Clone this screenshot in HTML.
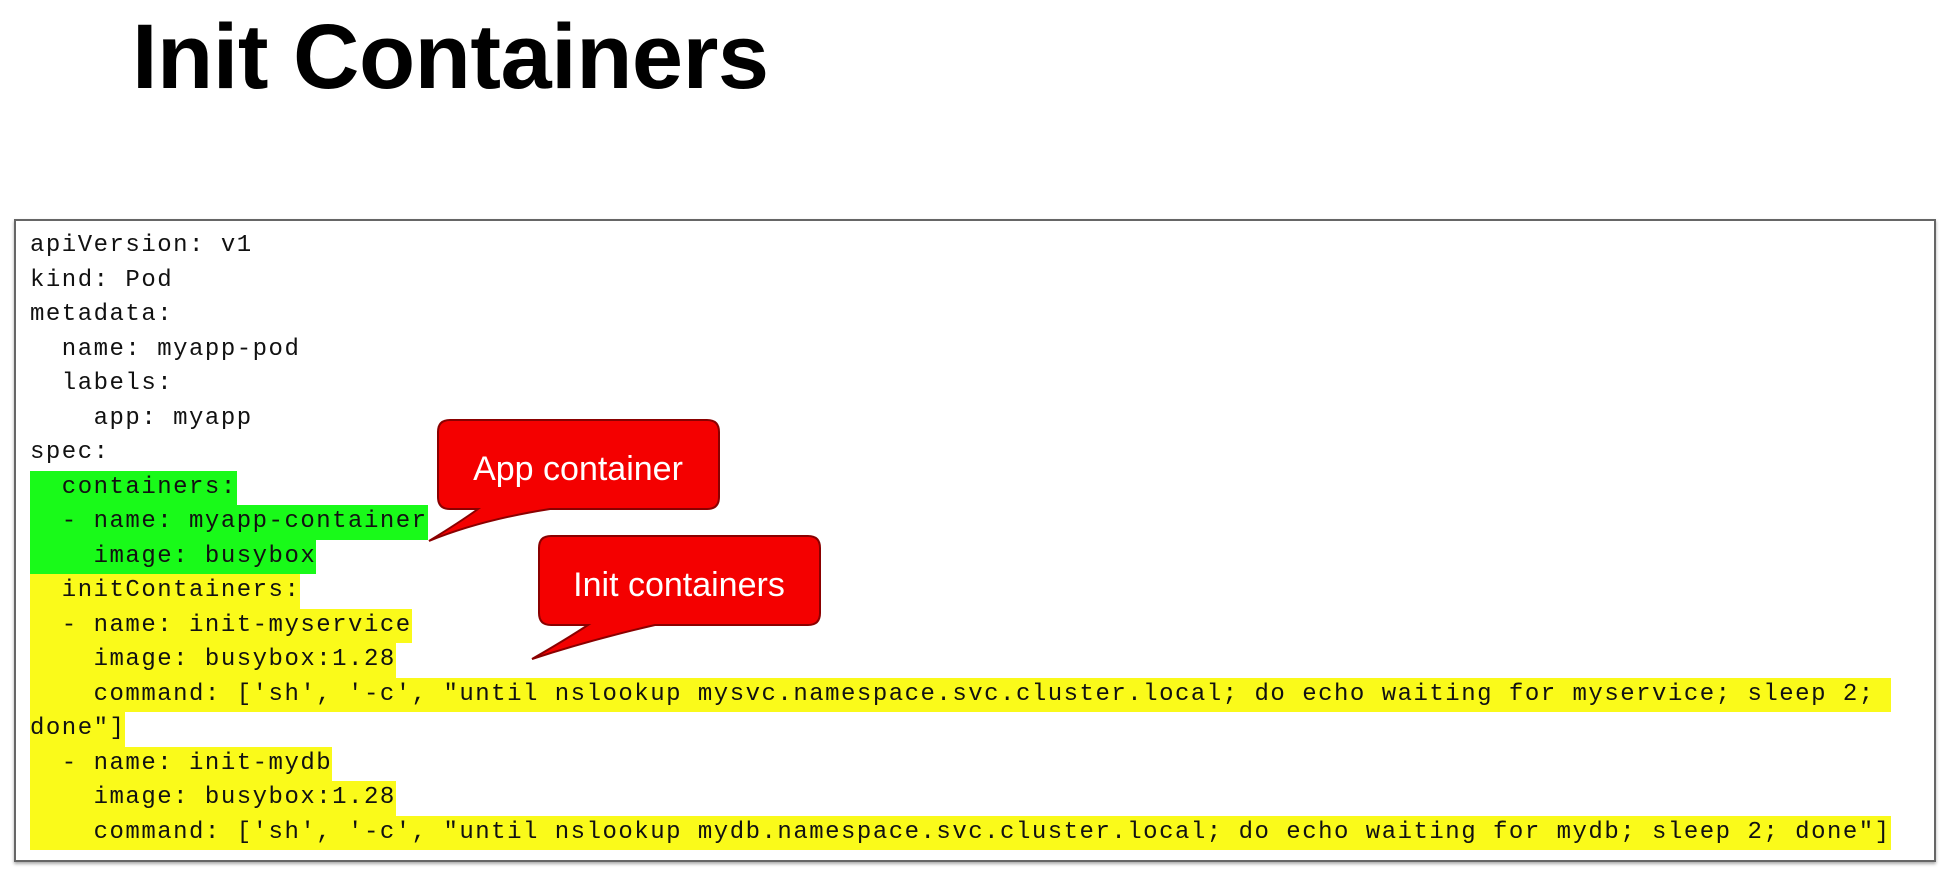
<!DOCTYPE html>
<html><head><meta charset="utf-8"><style>
html,body{margin:0;padding:0;background:#fff;width:1951px;height:883px;overflow:hidden;position:relative}
.title{position:absolute;left:132px;top:-3px;font:bold 92px/120px "Liberation Sans",sans-serif;color:#000;letter-spacing:-0.5px}
.box{position:absolute;left:14px;top:219px;width:1918px;height:639px;border:2px solid #666;box-shadow:0 2px 3px #aaa}
.code{position:absolute;left:30px;top:229px;font:24px "Liberation Mono",monospace;letter-spacing:1.5px;color:#111;white-space:pre}
.l{height:34.5px;line-height:34.5px}
.l span{display:inline-block;height:34.5px}
.g{background:#19fa19}
.y{background:#fafa1a}
svg{position:absolute;left:0;top:0}
</style></head><body>
<div class="title">Init Containers</div>
<div class="box"></div>
<div class="code"><div class="l">apiVersion: v1</div><div class="l">kind: Pod</div><div class="l">metadata:</div><div class="l">  name: myapp-pod</div><div class="l">  labels:</div><div class="l">    app: myapp</div><div class="l">spec:</div><div class="l"><span class="g">  containers:</span></div><div class="l"><span class="g">  - name: myapp-container</span></div><div class="l"><span class="g">    image: busybox</span></div><div class="l"><span class="y">  initContainers:</span></div><div class="l"><span class="y">  - name: init-myservice</span></div><div class="l"><span class="y">    image: busybox:1.28</span></div><div class="l"><span class="y">    command: ['sh', '-c', "until nslookup mysvc.namespace.svc.cluster.local; do echo waiting for myservice; sleep 2; </span></div><div class="l"><span class="y">done"]</span></div><div class="l"><span class="y">  - name: init-mydb</span></div><div class="l"><span class="y">    image: busybox:1.28</span></div><div class="l"><span class="y">    command: ['sh', '-c', "until nslookup mydb.namespace.svc.cluster.local; do echo waiting for mydb; sleep 2; done"]</span></div></div>
<svg width="1951" height="883" font-family="Liberation Sans, sans-serif">
<path d="M450 420 H707 Q719 420 719 432 V497 Q719 509 707 509 H550 Q480 520 429 541 Q460 522 478 509 H450 Q438 509 438 497 V432 Q438 420 450 420 Z" fill="#f40000" stroke="#8a0000" stroke-width="2"/>
<text x="578" y="480" font-size="34" fill="#fff" text-anchor="middle">App container</text>
<path d="M551 536 H808 Q820 536 820 548 V613 Q820 625 808 625 H655 Q590 640 532 659 Q565 640 588 625 H551 Q539 625 539 613 V548 Q539 536 551 536 Z" fill="#f40000" stroke="#8a0000" stroke-width="2"/>
<text x="679" y="596" font-size="34" fill="#fff" text-anchor="middle">Init containers</text>
</svg>
</body></html>
